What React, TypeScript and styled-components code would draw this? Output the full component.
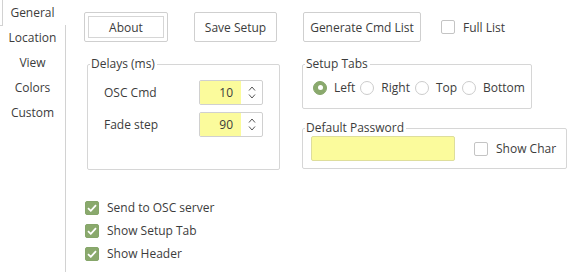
import React from "react";
import styled, { createGlobalStyle } from "styled-components";

const GlobalStyle = createGlobalStyle`
  html, body {
    margin: 0;
    padding: 0;
    background: #ffffff;
  }
  body {
    font-family: "Open Sans", "Liberation Sans", sans-serif;
    font-size: 12px;
    color: #3c3c3c;
  }
  * {
    box-sizing: border-box;
  }
`;

const Window = styled.div`
  display: flex;
  width: 576px;
  height: 272px;
  overflow: hidden;
  background: #ffffff;
`;

const TabColumn = styled.div`
  display: flex;
  flex-direction: column;
  width: 66px;
  flex-shrink: 0;
`;

const ActiveTab = styled.div`
  height: 25px;
  margin-left: 2px;
  border-left: 1px solid #d2d2d2;
  display: flex;
  align-items: center;
  justify-content: center;
  padding-right: 4px;
`;

const TabStack = styled.div`
  position: relative;
  flex: 1;
  display: flex;
  flex-direction: column;
  border-right: 1px solid #d2d2d2;

  &::before {
    content: "";
    position: absolute;
    left: 0;
    top: 0;
    width: 3px;
    height: 1px;
    background: #d2d2d2;
  }
`;

const Tab = styled.div`
  height: 25px;
  display: flex;
  align-items: center;
  justify-content: center;
`;

const Page = styled.div`
  flex: 1;
  display: flex;
  flex-direction: column;
  padding: 12px 0 0 18px;
`;

const ButtonRow = styled.div`
  display: flex;
  align-items: center;
  height: 30px;
`;

const Button = styled.button<{ $width: number; $focus?: boolean; $gap?: number }>`
  width: ${({ $width }) => $width}px;
  height: 30px;
  margin-right: ${({ $gap }) => ($gap ?? 26)}px;
  background: #ffffff;
  border: 1px solid #cfcfcf;
  border-radius: 2px;
  font: inherit;
  color: #3c3c3c;
  padding: 0;
  outline: ${({ $focus }) => ($focus ? "1px solid #d6d6d6" : "none")};
  outline-offset: -5px;
`;

const Check = styled.label`
  display: flex;
  align-items: center;
  gap: 8px;
  white-space: nowrap;
`;

const Box = styled.span<{ $checked?: boolean }>`
  width: 14px;
  height: 14px;
  border-radius: 2px;
  border: 1px solid ${({ $checked }) => ($checked ? "#86a66a" : "#c4c4c4")};
  background: ${({ $checked }) => ($checked ? "#8aa96d" : "#ffffff")};
  display: flex;
  align-items: center;
  justify-content: center;
  flex-shrink: 0;
`;

const Middle = styled.div`
  display: flex;
  align-items: flex-start;
  margin-top: 15px;
  margin-left: 3px;
  gap: 22px;
`;

const Group = styled.fieldset<{ $width: number }>`
  width: ${({ $width }) => $width}px;
  margin: 0;
  padding: 0;
  border: 1px solid #d6d6d6;
  border-radius: 2px;
  min-inline-size: 0;
`;

const Title = styled.legend`
  margin-left: 2px;
  padding: 0 2px 0 1px;
  line-height: 14px;
`;

const DelayBody = styled.div`
  padding: 9px 16px 32px 16px;
  display: flex;
  flex-direction: column;
  gap: 7px;
`;

const FieldRow = styled.div`
  display: flex;
  align-items: center;
  height: 25px;
`;

const FieldLabel = styled.span`
  width: 95px;
`;

const Spin = styled.div`
  display: flex;
  width: 64px;
  height: 25px;
  border: 1px solid #d0d0d0;
  border-radius: 2px;
  overflow: hidden;
`;

const SpinValue = styled.div`
  width: 41px;
  background: #fbfb9c;
  display: flex;
  align-items: center;
  justify-content: flex-end;
  padding-right: 8px;
`;

const SpinArrows = styled.div`
  flex: 1;
  display: flex;
  flex-direction: column;
  align-items: center;
  justify-content: center;
  gap: 3px;
`;

const RightColumn = styled.div`
  display: flex;
  flex-direction: column;
  gap: 12px;
`;

const RadioBody = styled.div`
  padding: 8px 8px 12px 10px;
  display: flex;
  align-items: center;
`;

const Radio = styled.label`
  display: flex;
  align-items: center;
  gap: 7px;
  margin-right: 5px;
`;

const Dot = styled.span<{ $on?: boolean }>`
  width: 14px;
  height: 14px;
  border-radius: 50%;
  border: 1px solid ${({ $on }) => ($on ? "#86a66a" : "#cccccc")};
  background: ${({ $on }) => ($on ? "#8aa96d" : "#ffffff")};
  display: flex;
  align-items: center;
  justify-content: center;

  &::after {
    content: "";
    display: ${({ $on }) => ($on ? "block" : "none")};
    width: 5px;
    height: 5px;
    border-radius: 50%;
    background: #ffffff;
  }
`;

const PasswordBody = styled.div`
  padding: 1px 8px 7px 8px;
  display: flex;
  align-items: center;
  gap: 19px;
`;

const PasswordInput = styled.div`
  width: 144px;
  height: 25px;
  background: #fbfb9c;
  border: 1px solid #dede9c;
  border-radius: 2px;
`;

const Options = styled.div`
  display: flex;
  flex-direction: column;
  gap: 6px;
  margin-top: 29px;
  margin-left: 1px;
`;

const Tick = () => (
  <svg width="10" height="8" viewBox="0 0 10 8">
    <path d="M1 4.2 L3.8 6.8 L9 1.2" fill="none" stroke="#ffffff" strokeWidth="1.8" />
  </svg>
);

const Chevron = ({ up }: { up?: boolean }) => (
  <svg width="8" height="5" viewBox="0 0 8 5">
    <path
      d={up ? "M1 4.5 L4 1 L7 4.5" : "M1 0.5 L4 4 L7 0.5"}
      fill="none"
      stroke="#555555"
      strokeWidth="1"
    />
  </svg>
);

const CheckBox = ({ checked, children }: { checked?: boolean; children: React.ReactNode }) => (
  <Check>
    <Box $checked={checked}>{checked && <Tick />}</Box>
    {children}
  </Check>
);

const SpinBox = ({ value }: { value: number }) => (
  <Spin>
    <SpinValue>{value}</SpinValue>
    <SpinArrows>
      <Chevron up />
      <Chevron />
    </SpinArrows>
  </Spin>
);

const App = () => {
  return (
    <Window>
      <GlobalStyle />
      <TabColumn>
        <ActiveTab>General</ActiveTab>
        <TabStack>
          {["Location", "View", "Colors", "Custom"].map((name) => (
            <Tab key={name}>{name}</Tab>
          ))}
        </TabStack>
      </TabColumn>
      <Page>
        <ButtonRow>
          <Button $width={84} $focus>
            About
          </Button>
          <Button $width={83}>Save Setup</Button>
          <Button $width={118} $gap={20}>
            Generate Cmd List
          </Button>
          <CheckBox>Full List</CheckBox>
        </ButtonRow>
        <Middle>
          <Group $width={193}>
            <Title>Delays (ms)</Title>
            <DelayBody>
              <FieldRow>
                <FieldLabel>OSC Cmd</FieldLabel>
                <SpinBox value={10} />
              </FieldRow>
              <FieldRow>
                <FieldLabel>Fade step</FieldLabel>
                <SpinBox value={90} />
              </FieldRow>
            </DelayBody>
          </Group>
          <RightColumn>
            <Group $width={230}>
              <Title>Setup Tabs</Title>
              <RadioBody>
                <Radio>
                  <Dot $on />
                  Left
                </Radio>
                <Radio>
                  <Dot />
                  Right
                </Radio>
                <Radio>
                  <Dot />
                  Top
                </Radio>
                <Radio>
                  <Dot />
                  Bottom
                </Radio>
              </RadioBody>
            </Group>
            <Group $width={265}>
              <Title>Default Password</Title>
              <PasswordBody>
                <PasswordInput />
                <CheckBox>Show Char</CheckBox>
              </PasswordBody>
            </Group>
          </RightColumn>
        </Middle>
        <Options>
          <CheckBox checked>Send to OSC server</CheckBox>
          <CheckBox checked>Show Setup Tab</CheckBox>
          <CheckBox checked>Show Header</CheckBox>
        </Options>
      </Page>
    </Window>
  );
};

export default App;
